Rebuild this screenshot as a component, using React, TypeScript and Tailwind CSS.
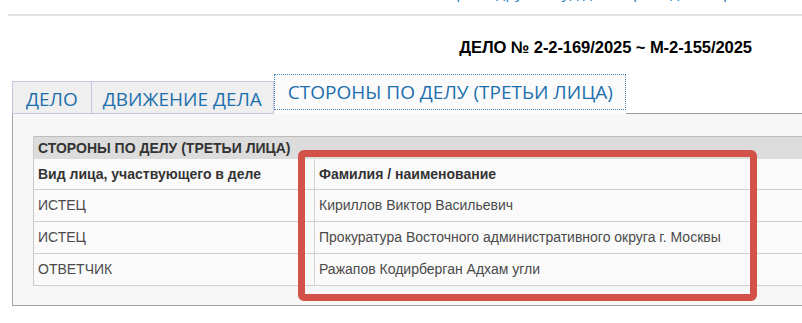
import React from 'react';

const rows = [
    { role: 'ИСТЕЦ', name: 'Кириллов Виктор Васильевич' },
    { role: 'ИСТЕЦ', name: 'Прокуратура Восточного административного округа г. Москвы' },
    { role: 'ОТВЕТЧИК', name: 'Ражапов Кодирберган Адхам угли' },
];

const App: React.FC = () => {
    return (
        <div className="w-[802px] h-[323px] bg-white overflow-hidden relative font-['Liberation_Sans',Arial,sans-serif]">
            {/* link line, scrolled mostly out of view */}
            <div className="h-[4px] overflow-hidden pl-[424px]">
                <div className="-mt-[16px] text-[16px] leading-[16px] text-[#2a7fc0] whitespace-nowrap font-['Open_Sans',sans-serif]">
                    Выбрать другой суд для перехода в справочник
                </div>
            </div>
            <div className="ml-[8px] mt-[10px] h-[2px] bg-[#e2e2e2]" />

            {/* Title */}
            <div className="mt-[23px] pr-[50px] text-right leading-[17px]">
                <span className="text-[16.6px] font-bold text-black tracking-[-0.1px]">
                    ДЕЛО № 2-2-169/2025 ~ М-2-155/2025
                </span>
            </div>

            {/* Tabs */}
            <div className="mt-[18px] ml-[12px] flex items-end font-['Open_Sans',sans-serif] text-[19px] text-[#1c6fae]">
                <div className="h-[33px] pt-[3px] px-[13px] flex items-center border border-[#c5c5e0] border-r-0 bg-[#efefef]">ДЕЛО</div>
                <div className="h-[33px] pt-[3px] px-[11px] flex items-center border border-[#c5c5e0] bg-[#efefef]">ДВИЖЕНИЕ ДЕЛА</div>
                <div className="h-[40px] w-[352px] bg-[#fbfbfb] relative">
                    <div className="absolute left-0 top-0 w-[352px] h-[36px] border border-dotted border-[#4b86b4] flex items-center pl-[13px]">
                        СТОРОНЫ ПО ДЕЛУ (ТРЕТЬИ ЛИЦА)
                    </div>
                </div>
                <div className="flex-1 h-[1px] bg-[#9a9a9a]" />
            </div>

            {/* Panel */}
            <div className="ml-[12px] h-[192px] border-l border-b border-[#a3a3a3] bg-[#f7f7f7] pt-[22px] pl-[20px]">
                <div className="border-l border-[#c9c9c9] bg-[#fafafa] text-[14px]">
                    <div className="h-[23px] bg-[#dcdcdc] border-t border-[#bdbdbd] flex items-center pl-[4px] font-bold text-[#333] text-[14px]">
                        СТОРОНЫ ПО ДЕЛУ (ТРЕТЬИ ЛИЦА)
                    </div>
                    <div className="flex h-[31px] border-b border-[#cfcfcf] font-bold text-[#333]">
                        <div className="w-[281px] border-r border-[#d3d3d3] flex items-center pl-[4px]">Вид лица, участвующего в деле</div>
                        <div className="flex-1 flex items-center pl-[4px]">Фамилия / наименование</div>
                    </div>
                    {rows.map((r, i) => (
                        <div key={i} className="flex h-[32px] border-b border-[#cfcfcf] text-[#4a4a4a]">
                            <div className="w-[281px] border-r border-[#d3d3d3] flex items-center pl-[4px]">{r.role}</div>
                            <div className="flex-1 flex items-center pl-[4px]">{r.name}</div>
                        </div>
                    ))}
                </div>
            </div>

            {/* Highlight frame */}
            <div className="absolute left-[298px] top-[150px] w-[459px] h-[151px] border-[7px] border-[#d2524a] rounded-[6px]" />
        </div>
    );
};

export default App;
